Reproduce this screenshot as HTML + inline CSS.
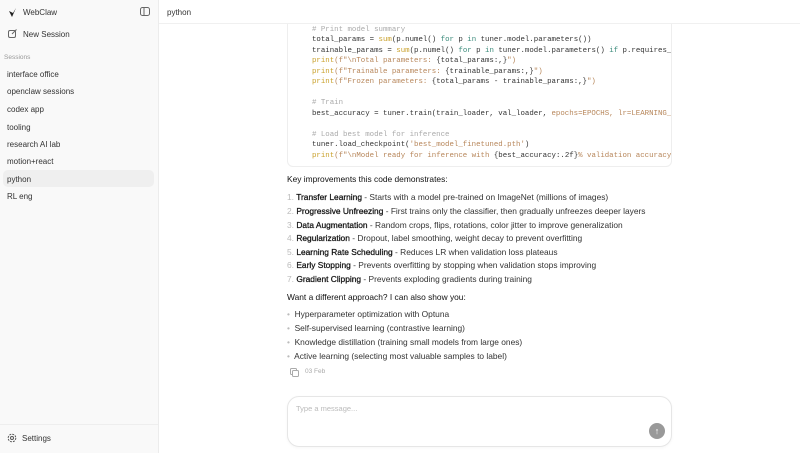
<!DOCTYPE html><html><head><style>
*{margin:0;padding:0;box-sizing:border-box}
body{width:800px;height:453px;overflow:hidden;font-family:"Liberation Sans",sans-serif;background:#fff;position:relative;color:#222}
.sb{position:absolute;left:0;top:0;width:159px;height:453px;background:#f9f9f9;border-right:1px solid #ececec}
.sb .t{position:absolute;font-size:8px;color:#333}
.main{position:absolute;left:159px;top:0;right:0;height:453px}
.hdr{position:absolute;left:0;top:0;right:0;height:24px;border-bottom:1px solid #f0f0f0;background:#fff;z-index:2}
.code{position:absolute;left:128px;top:13px;width:385px;height:154px;border:1px solid #eee;border-radius:6px;background:#fff;font-family:"Liberation Mono",monospace;font-size:7.4px;color:#333;overflow:hidden;padding:0 0 0 24px}
.code div{height:10.5px;line-height:10.5px;white-space:pre}
.c{color:#aaa}.k{color:#3a8a7a}.s{color:#b7865a}.f{color:#c9a02a}
.tx{position:absolute;left:128px;font-size:8.4px;color:#333;white-space:nowrap}
.tx b{font-weight:normal;color:#111;-webkit-text-stroke:.25px #111}
.n{color:#bbb}
</style></head><body>
<div class="sb">
<svg style="position:absolute;left:8px;top:7px" width="9" height="11" viewBox="0 0 9 11"><path d="M1 4 L4 10 L8 1 L5 6 Z" fill="#222"/></svg>
<div class="t" style="left:23px;top:8px;font-size:8px">WebClaw</div>
<svg style="position:absolute;left:140px;top:7px" width="10" height="9"><rect x=".5" y=".5" width="9" height="8" rx="2" fill="none" stroke="#666"/><line x1="4" y1="1" x2="4" y2="8" stroke="#666"/></svg>
<svg style="position:absolute;left:8px;top:29px" width="9" height="9"><rect x=".5" y="1.5" width="7" height="7" rx="1.5" fill="none" stroke="#666"/><path d="M4 5 L8.5 .5" stroke="#666"/></svg>
<div class="t" style="left:23px;top:30px">New Session</div>
<div class="t" style="left:4px;top:54px;font-size:6.5px;color:#999">Sessions</div>
<div class="t" style="left:7px;top:70px">interface office</div>
<div class="t" style="left:7px;top:87px">openclaw sessions</div>
<div class="t" style="left:7px;top:105px">codex app</div>
<div class="t" style="left:7px;top:123px">tooling</div>
<div class="t" style="left:7px;top:140px">research AI lab</div>
<div class="t" style="left:7px;top:157px">motion+react</div>
<div style="position:absolute;left:3px;top:170px;width:151px;height:17px;background:#efefef;border-radius:5px"></div>
<div class="t" style="left:7px;top:175px">python</div>
<div class="t" style="left:7px;top:192px">RL eng</div>
<div style="position:absolute;left:0;top:424px;width:158px;border-top:1px solid #eee"></div>
<svg style="position:absolute;left:7px;top:433px" width="10" height="10"><circle cx="5" cy="5" r="3.8" fill="none" stroke="#555" stroke-dasharray="2 1"/><circle cx="5" cy="5" r="1.5" fill="none" stroke="#555"/></svg>
<div class="t" style="left:22px;top:434px">Settings</div>
</div>
<div class="main">
<div class="hdr"><div style="position:absolute;left:8px;top:8px;font-size:8px;color:#333">python</div></div>
<div class="code"><div> </div><div class="c"># Print model summary</div><div>total_params = <span class="f">sum</span>(p.numel() <span class="k">for</span> p <span class="k">in</span> tuner.model.parameters())</div><div>trainable_params = <span class="f">sum</span>(p.numel() <span class="k">for</span> p <span class="k">in</span> tuner.model.parameters() <span class="k">if</span> p.requires_grad)</div><div><span class="f">print</span><span class="s">(f"\nTotal parameters: </span>{total_params:,}<span class="s">")</span></div><div><span class="f">print</span><span class="s">(f"Trainable parameters: </span>{trainable_params:,}<span class="s">")</span></div><div><span class="f">print</span><span class="s">(f"Frozen parameters: </span>{total_params - trainable_params:,}<span class="s">")</span></div><div> </div><div class="c"># Train</div><div>best_accuracy = tuner.train(train_loader, val_loader, <span class="s">epochs=EPOCHS, lr=LEARNING_RATE</span>)</div><div> </div><div class="c"># Load best model for inference</div><div>tuner.load_checkpoint(<span class="s">'best_model_finetuned.pth'</span>)</div><div><span class="f">print</span><span class="s">(f"\nModel ready for inference with </span>{best_accuracy:.2f}<span class="s">% validation accuracy!")</span></div></div>
<div class="tx" style="top:174px;color:#111">Key improvements this code demonstrates:</div>
<div class="tx" style="top:192px"><span class="n">1.</span> <b>Transfer Learning</b> - Starts with a model pre-trained on ImageNet (millions of images)</div>
<div class="tx" style="top:206px"><span class="n">2.</span> <b>Progressive Unfreezing</b> - First trains only the classifier, then gradually unfreezes deeper layers</div>
<div class="tx" style="top:220px"><span class="n">3.</span> <b>Data Augmentation</b> - Random crops, flips, rotations, color jitter to improve generalization</div>
<div class="tx" style="top:233px"><span class="n">4.</span> <b>Regularization</b> - Dropout, label smoothing, weight decay to prevent overfitting</div>
<div class="tx" style="top:247px"><span class="n">5.</span> <b>Learning Rate Scheduling</b> - Reduces LR when validation loss plateaus</div>
<div class="tx" style="top:260px"><span class="n">6.</span> <b>Early Stopping</b> - Prevents overfitting by stopping when validation stops improving</div>
<div class="tx" style="top:274px"><span class="n">7.</span> <b>Gradient Clipping</b> - Prevents exploding gradients during training</div>
<div class="tx" style="top:292px;color:#111">Want a different approach? I can also show you:</div>
<div class="tx" style="top:309px"><span class="n">•</span>&nbsp; Hyperparameter optimization with Optuna</div>
<div class="tx" style="top:323px"><span class="n">•</span>&nbsp; Self-supervised learning (contrastive learning)</div>
<div class="tx" style="top:337px"><span class="n">•</span>&nbsp; Knowledge distillation (training small models from large ones)</div>
<div class="tx" style="top:351px"><span class="n">•</span>&nbsp; Active learning (selecting most valuable samples to label)</div>
<svg style="position:absolute;left:131px;top:368px" width="9" height="9"><rect x=".5" y=".5" width="6" height="6" rx="1" fill="none" stroke="#aaa"/><rect x="2.5" y="2.5" width="6" height="6" rx="1" fill="#fff" stroke="#aaa"/></svg>
<div class="tx" style="left:146px;top:368px;font-size:6.5px;color:#aaa">03 Feb</div>
<div style="position:absolute;left:128px;top:396px;width:385px;height:51px;border:1px solid #e6e6e6;border-radius:12px;background:#fff;box-shadow:0 1px 3px rgba(0,0,0,.04)"></div>
<div class="tx" style="left:137px;top:404px;font-size:7.5px;color:#bbb">Type a message...</div>
<div style="position:absolute;left:490px;top:423px;width:16px;height:16px;border-radius:50%;background:#999;color:#fff;font-size:9px;text-align:center;line-height:16px">↑</div>
</div>
</body></html>
